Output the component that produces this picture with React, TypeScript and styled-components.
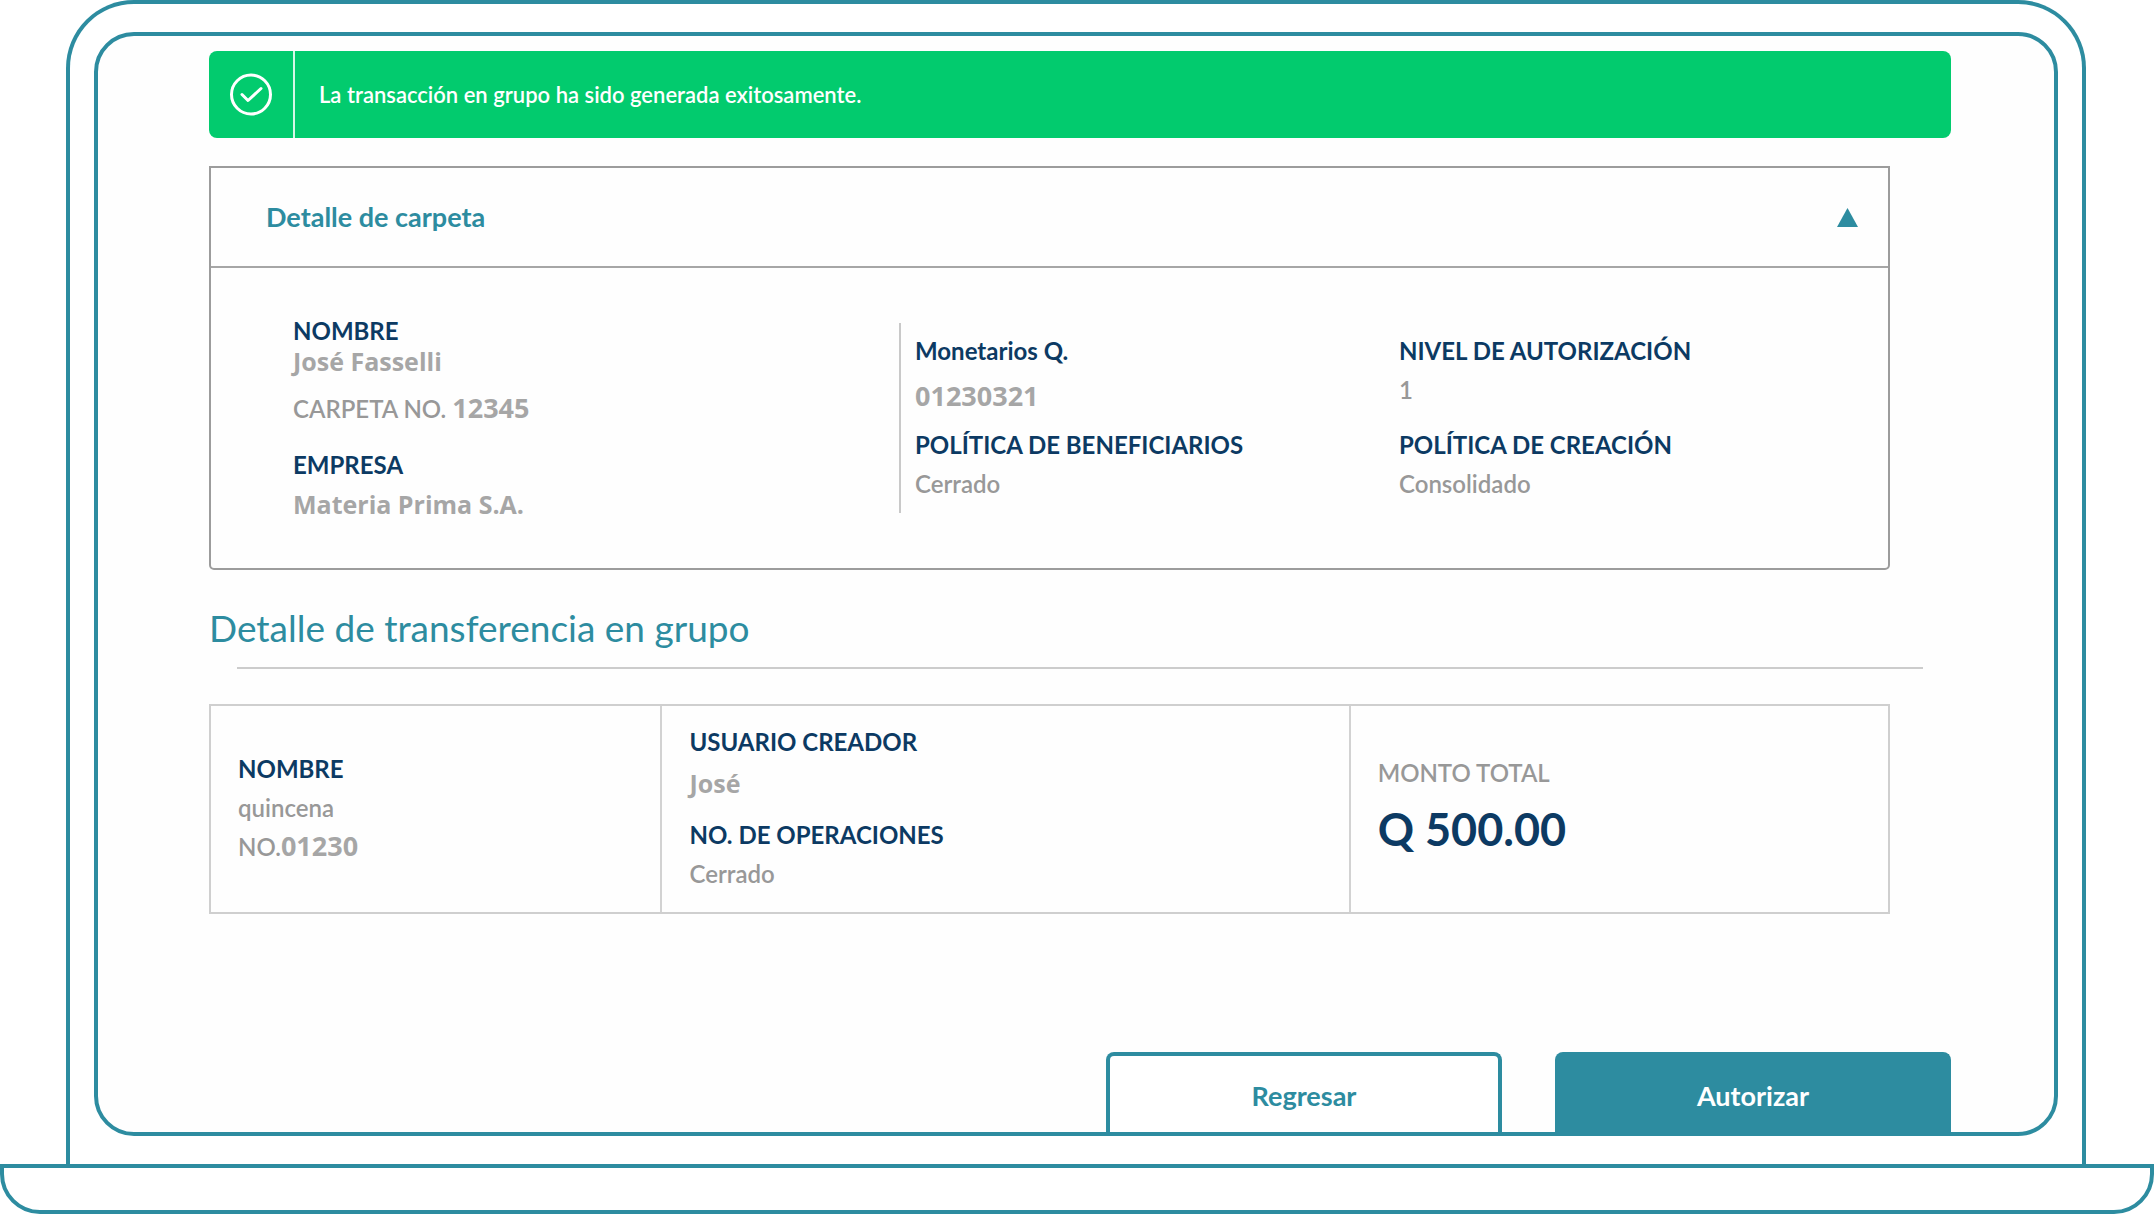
import React from "react";
import styled, { createGlobalStyle } from "styled-components";

const teal = "#2d8ca0";
const navy = "#0c3a63";
const grey = "#989898";

const GlobalStyle = createGlobalStyle`
  *, *::before, *::after { box-sizing: border-box; }
  body { margin: 0; background: #ffffff; font-family: Lato, "Open Sans", sans-serif; }
  h1, h2, p, dl, dd { margin: 0; }
`;

const Laptop = styled.div`
  min-height: 100vh;
  display: flex;
  flex-direction: column;
`;

const Lid = styled.div`
  flex: 1;
  display: flex;
  margin: 0 68px 0 66px;
  padding: 28px 24px;
  border: 4px solid ${teal};
  border-bottom: 0;
  border-radius: 68px 68px 0 0;
`;

const Base = styled.div`
  height: 50px;
  border: 4px solid ${teal};
  border-radius: 0 0 40px 40px;
`;

const Screen = styled.main`
  flex: 1;
  display: flex;
  flex-direction: column;
  padding: 15px 103px 0 111px;
  border: 4px solid ${teal};
  border-radius: 40px;
  background: #fefefe;
`;

const Banner = styled.div`
  display: flex;
  align-items: stretch;
  min-height: 87px;
  border-radius: 8px;
  background: #02cb6e;
  color: #ffffff;
`;

const BannerIcon = styled.div`
  width: 86px;
  display: grid;
  place-items: center;
  border-right: 2px solid #d5f7e6;
`;

const BannerText = styled.p`
  align-self: center;
  padding-left: 24px;
  font-size: 22px;
  font-weight: 600;
  line-height: 30px;
`;

const Folder = styled.section`
  margin: 28px 61px 0 0;
  border: 2px solid #9c9c9c;
  border-radius: 0 0 5px 5px;
`;

const FolderHeader = styled.header`
  display: flex;
  align-items: center;
  justify-content: space-between;
  height: 100px;
  padding: 0 30px 0 55px;
  border-bottom: 2px solid #a6a6a6;
`;

const FolderTitle = styled.h2`
  color: ${teal};
  font-size: 27px;
  font-weight: 700;
  line-height: 34px;
`;

const Toggle = styled.button`
  display: flex;
  padding: 0;
  border: 0;
  background: none;
  cursor: pointer;
`;

const FolderBody = styled.div`
  display: grid;
  grid-template-columns: 688fr 500fr 489fr;
  padding: 48px 0;
`;

const FolderColumn = styled.dl<{ $divided?: boolean; $lead: number }>`
  display: flex;
  flex-direction: column;
  gap: ${(p) => (p.$lead > 20 ? 26 : 18)}px;
  align-self: start;
  margin-top: ${(p) => (p.$lead > 20 ? 0 : 7)}px;
  min-height: 190px;
  padding: ${(p) => (p.$lead > 20 ? 0 : 13)}px 0 0 ${(p) => p.$lead}px;
  border-left: ${(p) => (p.$divided ? "2px solid #c9c9c9" : "0")};
`;

const Field = styled.div<{ $gap?: number; $min?: number }>`
  display: flex;
  flex-direction: column;
  gap: ${(p) => p.$gap ?? 9}px;
  min-height: ${(p) => p.$min ?? 0}px;
`;

const Term = styled.dt<{ $muted?: boolean }>`
  color: ${(p) => (p.$muted ? grey : navy)};
  font-size: 24px;
  font-weight: ${(p) => (p.$muted ? 600 : 700)};
  line-height: 30px;
`;

const Value = styled.dd<{ $spaced?: boolean }>`
  color: ${grey};
  font-size: 24px;
  font-weight: 600;
  line-height: 30px;
  padding-top: ${(p) => (p.$spaced ? 16 : 0)}px;
`;

const Strong = styled.strong<{ $figures?: boolean }>`
  color: #a6a6a6;
  font-family: "Open Sans", "Noto Sans", sans-serif;
  font-size: ${(p) => (p.$figures ? 27 : 25)}px;
  font-weight: 700;
  line-height: 1;
`;

const Amount = styled.dd`
  color: ${navy};
  font-size: 45px;
  font-weight: 700;
  line-height: 58px;
`;

const SectionTitle = styled.h1`
  margin-top: 36px;
  color: ${teal};
  font-size: 37px;
  font-weight: 400;
  line-height: 44px;
`;

const Rule = styled.hr`
  width: auto;
  margin: 17px 28px 0;
  border: 0;
  border-top: 2px solid #cccccc;
`;

const Transfer = styled.section`
  display: grid;
  grid-template-columns: 450fr 689fr 540fr;
  margin: 35px 61px 0 0;
  border: 2px solid #cfcfcf;
`;

const TransferColumn = styled.dl`
  display: flex;
  flex-direction: column;
  justify-content: center;
  gap: 21px;
  min-height: 206px;
  padding: 20px 27px 22px;

  & + & { border-left: 2px solid #d2d2d2; }
`;

const Actions = styled.div`
  display: flex;
  justify-content: flex-end;
  gap: 53px;
  margin-top: auto;
`;

const ActionButton = styled.button<{ $primary?: boolean }>`
  width: 396px;
  height: 80px;
  padding: 4px 0 0;
  border: 4px solid ${teal};
  border-bottom: 0;
  border-radius: 8px 8px 0 0;
  background: ${(p) => (p.$primary ? teal : "#ffffff")};
  color: ${(p) => (p.$primary ? "#ffffff" : teal)};
  font-family: inherit;
  font-size: 27px;
  font-weight: 700;
  line-height: 34px;
  cursor: pointer;
`;

export default function App() {
  return (
    <Laptop>
      <GlobalStyle />
      <Lid>
        <Screen>
          <Banner role="status">
            <BannerIcon>
              <svg width="44" height="44" viewBox="0 0 44 44" fill="none" stroke="#ffffff" strokeWidth="3" aria-hidden="true">
                <circle cx="22" cy="21.5" r="19.5" />
                <path d="M13 21.5l6 6L32 15.5" strokeLinecap="round" strokeLinejoin="round" />
              </svg>
            </BannerIcon>
            <BannerText>La transacción en grupo ha sido generada exitosamente.</BannerText>
          </Banner>

          <Folder>
            <FolderHeader>
              <FolderTitle>Detalle de carpeta</FolderTitle>
              <Toggle type="button" aria-label="Contraer detalle de carpeta" aria-expanded="true">
                <svg width="21" height="19" viewBox="0 0 21 19" aria-hidden="true">
                  <path d="M10.5 0L21 19H0z" fill={teal} />
                </svg>
              </Toggle>
            </FolderHeader>
            <FolderBody>
              <FolderColumn $lead={82}>
                <Field $gap={1}>
                  <Term>NOMBRE</Term>
                  <Value><Strong>José Fasselli</Strong></Value>
                  <Value $spaced>CARPETA NO. <Strong $figures>12345</Strong></Value>
                </Field>
                <Field $gap={10}>
                  <Term>EMPRESA</Term>
                  <Value><Strong>Materia Prima S.A.</Strong></Value>
                </Field>
              </FolderColumn>
              <FolderColumn $lead={14} $divided>
                <Field $gap={16} $min={76}>
                  <Term>Monetarios Q.</Term>
                  <Value><Strong $figures>01230321</Strong></Value>
                </Field>
                <Field>
                  <Term>POLÍTICA DE BENEFICIARIOS</Term>
                  <Value>Cerrado</Value>
                </Field>
              </FolderColumn>
              <FolderColumn $lead={0}>
                <Field $min={76}>
                  <Term>NIVEL DE AUTORIZACIÓN</Term>
                  <Value>1</Value>
                </Field>
                <Field>
                  <Term>POLÍTICA DE CREACIÓN</Term>
                  <Value>Consolidado</Value>
                </Field>
              </FolderColumn>
            </FolderBody>
          </Folder>

          <SectionTitle>Detalle de transferencia en grupo</SectionTitle>
          <Rule />

          <Transfer>
            <TransferColumn>
              <Field>
                <Term>NOMBRE</Term>
                <Value>quincena</Value>
                <Value>NO.<Strong $figures>01230</Strong></Value>
              </Field>
            </TransferColumn>
            <TransferColumn>
              <Field $gap={12}>
                <Term>USUARIO CREADOR</Term>
                <Value><Strong>José</Strong></Value>
              </Field>
              <Field>
                <Term>NO. DE OPERACIONES</Term>
                <Value>Cerrado</Value>
              </Field>
            </TransferColumn>
            <TransferColumn>
              <Field $gap={12}>
                <Term $muted>MONTO TOTAL</Term>
                <Amount>Q 500.00</Amount>
              </Field>
            </TransferColumn>
          </Transfer>

          <Actions>
            <ActionButton type="button">Regresar</ActionButton>
            <ActionButton type="button" $primary>Autorizar</ActionButton>
          </Actions>
        </Screen>
      </Lid>
      <Base />
    </Laptop>
  );
}
